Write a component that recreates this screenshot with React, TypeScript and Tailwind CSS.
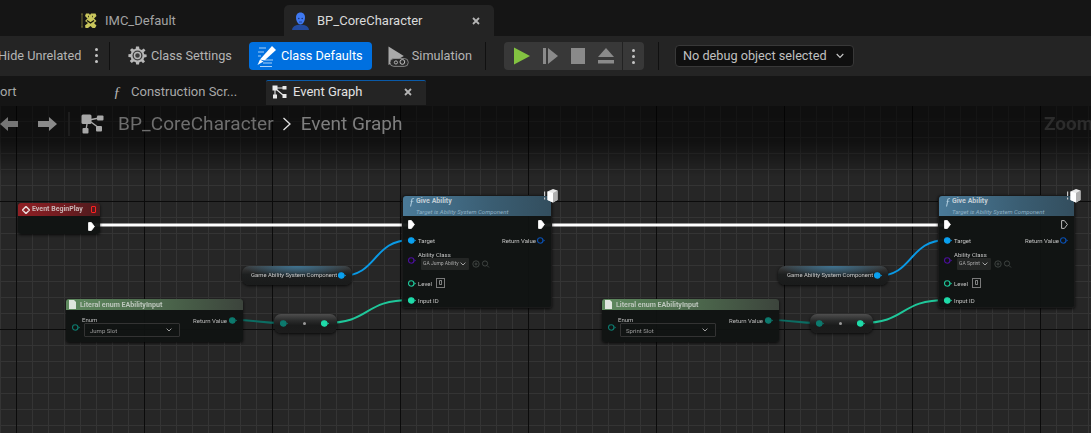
import React from "react";

const Kebab = ({ c = "bg-[#c4c4c4]" }: { c?: string }) => (
  <div className="flex flex-col gap-[3px] items-center">
    <span className={`w-[3px] h-[3px] rounded-full ${c}`} />
    <span className={`w-[3px] h-[3px] rounded-full ${c}`} />
    <span className={`w-[3px] h-[3px] rounded-full ${c}`} />
  </div>
);

const X = ({ c = "#b5b5b5" }: { c?: string }) => (
  <svg width="8" height="8" viewBox="0 0 8 8"><path d="M1 1L7 7M7 1L1 7" stroke={c} strokeWidth="1.8" /></svg>
);

const ImcIcon = () => (
  <svg width="18" height="18" viewBox="0 0 18 18" fill="none">
    <path d="M1 2H3M2 2V15M1 15H3" stroke="#6f6a33" strokeWidth="1" />
    <path d="M6 1.5H9L10 3L11 1.5H15.5L16.5 4L14 6.5L16.5 9L14 11L16.5 13.5L15 16H12.5L10.5 14L8 16H5.5L5 13.5L8 11L5 9L7.5 6.5L5 4Z" fill="#c9c65c" />
    <path d="M8 4.5H8.8M12.3 4.5H13M7 8.5L10.5 11L14 8.5" stroke="#17170c" strokeWidth="1.4" />
  </svg>
);

const BpIcon = () => (
  <svg width="17" height="18" viewBox="0 0 17 18">
    <path d="M0 18C0.5 14.5 3 13.5 6.5 12.8H10.5C14 13.5 16.5 14.5 17 18Z" fill="#234a9c" />
    <path d="M8.5 0.5C11.5 0.5 13 2.8 13 5.6C13 9 11 12.6 8.5 12.6C6 12.6 4 9 4 5.6C4 2.8 5.5 0.5 8.5 0.5Z" fill="#3f79f2" />
    <circle cx="6.8" cy="6.5" r="0.8" fill="#1a357d" /><circle cx="10.2" cy="6.5" r="0.8" fill="#1a357d" />
    <path d="M7 10H10" stroke="#1a357d" strokeWidth="0.8" />
  </svg>
);

const Gear = () => (
  <svg width="19" height="19" viewBox="0 0 19 19">
    <path d="M8 0.5H11L11.5 3L13.6 3.9L15.8 2.5L17.5 4.6L15.6 6.3L16.2 8.2L18.6 8.5V11L16.2 11.4L15.5 13.4L17 15.4L15 17.2L13.3 15.6L11.4 16.3L11 18.6H8.2L7.7 16.3L5.8 15.5L3.7 17L1.8 15L3.4 13.2L2.7 11.3L0.4 11V8.3L2.7 8L3.5 6L2 4.1L4 2.3L5.9 3.6L7.7 2.8Z" fill="#b8b8b8" />
    <circle cx="9.5" cy="9.5" r="5" fill="#3d3d3d" />
    <circle cx="9.5" cy="9.5" r="3" fill="none" stroke="#b8b8b8" strokeWidth="1.4" />
  </svg>
);

const PenIcon = () => (
  <svg width="20" height="23" viewBox="0 0 20 23">
    <path d="M2 3H9M1 7H7M1 11H4M8 15H16M6 18H15M3 21.5H15" stroke="#bcdcfb" strokeWidth="0.9" />
    <path d="M15 1L19 5L7.5 15.5L3 14.5Z" fill="#ffffff" />
    <path d="M3 14.5L6.5 16.5L0.5 20Z" fill="#ffffff" />
  </svg>
);

const SimIcon = () => (
  <svg width="21" height="21" viewBox="0 0 21 21">
    <path d="M0.5 0.5L16 10L0.5 19Z" fill="#a9a9a9" />
    <rect x="2" y="12.5" width="18.5" height="8" rx="4" fill="#2a2a2a" stroke="#9a9a9a" strokeWidth="0.8" />
    <circle cx="8" cy="16.5" r="1.6" fill="none" stroke="#c2c2c2" strokeWidth="0.9" />
    <circle cx="14.5" cy="16" r="2.4" fill="none" stroke="#c2c2c2" strokeWidth="1" />
  </svg>
);

const GraphIcon = ({ fill = "#eaeaea", big = false }: { fill?: string; big?: boolean }) =>
  big ? (
    <svg width="23" height="20" viewBox="0 0 23 20">
      <path d="M8 6L18 4M6 10L5 16M10 8L18 14" stroke={fill} strokeWidth="1.4" />
      <rect x="0.5" y="0.5" width="10" height="9.5" rx="1.5" fill={fill} />
      <rect x="16" y="1.5" width="6.5" height="5" rx="1" fill={fill} />
      <rect x="1.5" y="14" width="6" height="5.5" rx="1" fill={fill} />
      <rect x="15" y="12" width="6" height="5.5" rx="1" fill={fill} />
    </svg>
  ) : (
    <svg width="15" height="14" viewBox="0 0 15 14">
      <path d="M5 3L12 3M3 5V10M5 5L11 10" stroke={fill} strokeWidth="1.1" />
      <rect x="0.5" y="0.5" width="5" height="5" fill={fill} />
      <rect x="10.5" y="1" width="4" height="3.5" fill={fill} />
      <rect x="1" y="9.5" width="4" height="4" fill={fill} />
      <rect x="10.5" y="9" width="4" height="4" fill={fill} />
    </svg>
  );

const Cube = () => (
  <svg width="14" height="15" viewBox="0 0 14 15">
    <path d="M0 3.5H1.2V8H0ZM0 9.5H1.2V11.5H0Z" fill="#c8c8c8" />
    <path d="M3.5 3.5L9 1L13.5 2.5V12L9 14.5L3.5 12Z" fill="#e8e8e8" />
    <path d="M3.5 3.5L9 5V14.5L3.5 12Z" fill="#ffffff" />
    <path d="M9 5L13.5 2.5V12L9 14.5Z" fill="#b0b0b0" />
  </svg>
);

const Exec = ({ filled = true, color = "#ffffff" }: { filled?: boolean; color?: string }) => (
  <svg width="7" height="9" viewBox="0 0 7 9" className="shrink-0">
    <path d="M0.6 0.6H3.4L6.4 4.5L3.4 8.4H0.6Z" fill={filled ? color : "none"} stroke={color} strokeWidth="0.9" />
  </svg>
);

const Pin = ({ color, filled = true }: { color: string; filled?: boolean }) => (
  <svg width="8" height="7" viewBox="0 0 8 7" className="shrink-0">
    <circle cx="3.2" cy="3.5" r="2.7" fill={filled ? color : "none"} stroke={color} strokeWidth="1.1" />
    <path d="M6.4 2.3L8 3.5L6.4 4.7Z" fill={color} />
  </svg>
);

const SmallChevron = ({ c = "#c4c4c4" }: { c?: string }) => (
  <svg width="6" height="4" viewBox="0 0 6 4" className="shrink-0"><path d="M0.6 0.6L3 3L5.4 0.6" fill="none" stroke={c} strokeWidth="0.8" /></svg>
);

function GiveAbility({ ability, nodeWidth, ddWidth, hollowExec }: { ability: string; nodeWidth: string; ddWidth: string; hollowExec?: boolean }) {
  return (
    <div className={`absolute left-[402px] top-[89px] ${nodeWidth} h-[113px] rounded-[3px] bg-[#101312]/95 shadow-[0_1px_3px_rgba(0,0,0,0.8)] border border-[#1a1a1a]`}>
      <div className="blur-[0.25px]">
        <div className="h-[20px] rounded-t-[3px] bg-[linear-gradient(90deg,#4a7a98,#3a5d72_60%,#334e5e)] pl-[13px] leading-none pt-[1px]">
          <div className="text-[7px] font-bold text-[#c3ced6] leading-[9px] whitespace-nowrap">Give Ability</div>
          <div className="text-[6px] italic text-[#90b2c6] leading-[9px] mt-[1px] whitespace-nowrap">Target is Ability System Component</div>
        </div>
        <div className="pl-[5px] pr-[6px] pt-[4px] flex flex-col text-[6px] text-[#c4c4c4]">
          <div className="flex justify-between h-[9px] items-center">
            <Exec />
            <Exec filled={!hollowExec} color={hollowExec ? "#cfcfcf" : "#ffffff"} />
          </div>
          <div className="flex justify-between items-center h-[8px] mt-[7px]">
            <div className="flex items-center gap-[2px]"><Pin color="#0aa1f0" /><span>Target</span></div>
            <div className="flex items-center gap-[1px]"><span>Return Value</span><Pin color="#0a4fb0" filled={false} /></div>
          </div>
          <div className="flex mt-[7px] h-[20px]">
            <div className="mt-[6px]"><Pin color="#4b0f9c" filled={false} /></div>
            <div className="ml-[2px]">
              <div className="h-[8px] leading-[8px]">Ability Class</div>
              <div className="flex items-center gap-[3px] mt-[-1px] ml-[3px]">
                <div className={`${ddWidth} h-[12px] rounded-[1px] bg-[#242625] flex items-center justify-between pl-[2px] pr-[3px] text-[5px] text-[#a8a8a8] whitespace-nowrap`}>
                  <span>{ability}</span><SmallChevron />
                </div>
                <svg width="20" height="8" viewBox="0 0 20 8" fill="none" stroke="#4a4f4d" strokeWidth="0.8" className="shrink-0">
                  <circle cx="4" cy="4" r="3.2" /><path d="M2.5 4H5.5M4 2.5V5.5" />
                  <circle cx="13" cy="3.5" r="2.6" /><path d="M15 5.5L17 7.5" />
                </svg>
              </div>
            </div>
          </div>
          <div className="flex items-center mt-[7px] h-[10px] gap-[2px]">
            <Pin color="#1fc79a" filled={false} /><span className="w-[16px]">Level</span>
            <div className="w-[9px] h-[10px] border border-[#7a7a7a] text-[6.5px] leading-[8px] text-center">0</div>
          </div>
          <div className="flex items-center mt-[8px] h-[8px] gap-[2px]"><Pin color="#1fdcaa" /><span>Input ID</span></div>
        </div>
      </div>
      <div className="absolute left-[6px] top-[-1px] text-[#b9d4e4] text-[11px] italic font-['Liberation_Serif',serif] leading-[12px]">ƒ</div>
      <div className="absolute right-[-7px] top-[-8px]"><Cube /></div>
    </div>
  );
}

function Group({ slot, ability, nodeWidth, ddWidth, hollowExec }: { slot: string; ability: string; nodeWidth: string; ddWidth: string; hollowExec?: boolean }) {
  return (
    <>
      {/* Literal enum */}
      <div className="absolute left-[66px] top-[193px] w-[177px] h-[43px] rounded-[3px] bg-[#101312]/95 shadow-[0_1px_3px_rgba(0,0,0,0.8)]">
        <div className="blur-[0.25px]">
          <div className="h-[11px] rounded-t-[3px] bg-[linear-gradient(90deg,#5f8a5f,#4f6e4f_45%,#3c443c)] flex items-center pl-[3px] gap-[4px]">
            <svg width="7" height="9" viewBox="0 0 7 9" className="shrink-0"><path d="M0 0H5L7 2V9H0Z" fill="#dfe6df" /></svg>
            <span className="text-[7.1px] font-bold text-[#bcc6bc] whitespace-nowrap leading-none">Literal enum EAbilityInput</span>
          </div>
          <div className="flex justify-between pl-[6px] pr-[6px] text-[6px] text-[#bdbdbd]">
            <div className="flex">
              <div className="mt-[14px]"><Pin color="#0d7a6e" filled={false} /></div>
              <div className="ml-[2px]">
                <div className="h-[8px] leading-[8px] mt-[6px]">Enum</div>
                <div className="w-[96px] h-[14px] mt-[-1px] ml-[2px] border border-[#333] rounded-[1px] flex items-center justify-between pl-[5px] pr-[7px] text-[6px] text-[#9c9c9c]">
                  <span>{slot}</span><SmallChevron />
                </div>
              </div>
            </div>
            <div className="flex items-center h-[8px] mt-[6px] gap-[2px]"><span>Return Value</span><Pin color="#0d7a6e" /></div>
          </div>
        </div>
      </div>
      {/* Convert pill */}
      <div className="absolute left-[274px] top-[208px] w-[63px] h-[19px] rounded-[7px] bg-[linear-gradient(#4e4e4e,#2a2b2b_35%,#1a1b1b_60%,#1c1c1c)] shadow-[0_1px_3px_rgba(0,0,0,0.8)] flex items-center justify-between pl-[6px] pr-[8px]">
        <Pin color="#0d7a6e" />
        <span className="w-[3px] h-[3px] rounded-full bg-[#9a9a9a]" />
        <Pin color="#1fdcaa" />
      </div>
      {/* Game Ability System Component */}
      <div className="absolute left-[242px] top-[160px] w-[110px] h-[19px] rounded-[7px] bg-[radial-gradient(ellipse_50%_60%_at_50%_0%,#3f7391,transparent),linear-gradient(#3e3e3e,#1d1f1f_45%,#1a1b1b)] shadow-[0_1px_3px_rgba(0,0,0,0.8)] flex items-center pl-[9px] gap-[1px] text-[5.9px] text-[#c9c9c9] whitespace-nowrap">
        <span className="w-[86px] blur-[0.25px]">Game Ability System Component</span>
        <Pin color="#0aa1f0" />
      </div>
      <GiveAbility ability={ability} nodeWidth={nodeWidth} ddWidth={ddWidth} hollowExec={hollowExec} />
    </>
  );
}

export default function App() {
  return (
    <div className="relative w-[1091px] h-[433px] overflow-hidden bg-[#151515] flex flex-col font-['Roboto',sans-serif] text-[13px]">
      {/* Document tabs */}
      <div className="h-[36px] pt-[5px] flex shrink-0">
        <div className="w-[284px] flex items-center pl-[80px] gap-[7px] text-[#a3a3a3]">
          <ImcIcon /><span>IMC_Default</span>
        </div>
        <div className="w-[210px] rounded-t-[5px] bg-[#242424] flex items-center pl-[8px] pr-[14px] text-[#dadada]">
          <BpIcon />
          <span className="ml-[8px]">BP_CoreCharacter</span>
          <span className="ml-auto"><X /></span>
        </div>
      </div>
      {/* Toolbar */}
      <div className="h-[40px] bg-[#242424] flex items-center shrink-0 text-[#b4b4b4] text-[12.7px]">
        <div className="w-[109px] flex items-center justify-between pr-[11px] overflow-hidden">
          <span className="ml-[-2px] whitespace-nowrap">Hide Unrelated</span><Kebab />
        </div>
        <div className="w-[1px] h-[28px] bg-[#101010]" />
        <div className="ml-[18px] w-[104px] flex items-center gap-[4px]"><Gear /><span className="whitespace-nowrap">Class Settings</span></div>
        <div className="ml-[17px] w-[123px] h-[28px] rounded-[4px] bg-[#0070e0] text-white flex items-center pl-[8px] gap-[4px]">
          <PenIcon /><span className="whitespace-nowrap">Class Defaults</span>
        </div>
        <div className="ml-[16px] w-[84px] flex items-center gap-[3px]"><SimIcon /><span>Simulation</span></div>
        <div className="ml-[13px] w-[1px] h-[28px] bg-[#101010]" />
        <div className="ml-[18px] w-[140px] h-[28px] rounded-[4px] bg-[#383838] flex items-center">
          <svg width="118" height="18" viewBox="0 0 118 18" className="shrink-0">
            <path d="M10 0.5L26 9L10 17.5Z" fill="#83c341" />
            <rect x="39" y="1" width="3" height="16" fill="#8a8a8a" />
            <path d="M44 1L54 9L44 17Z" fill="#8a8a8a" />
            <rect x="67" y="1" width="14" height="16" fill="#8a8a8a" />
            <path d="M102 1L110 10H94Z" fill="#8a8a8a" />
            <rect x="94" y="13" width="16" height="3.5" fill="#8a8a8a" />
          </svg>
          <div className="w-[1px] h-[28px] bg-[#222]" />
          <div className="flex-1 flex justify-center"><Kebab /></div>
        </div>
        <div className="ml-[14px] w-[1px] h-[28px] bg-[#101010]" />
        <div className="ml-[16px] w-[179px] h-[22px] rounded-[4px] bg-[#0f0f0f] border border-[#383838] flex items-center pl-[7px] gap-[9px] text-[#c0c0c0]">
          <span className="whitespace-nowrap">No debug object selected</span>
          <svg width="8" height="6" viewBox="0 0 8 6" className="shrink-0"><path d="M0.7 1L4 4.5L7.3 1" fill="none" stroke="#c8c8c8" strokeWidth="1.1" /></svg>
        </div>
      </div>
      {/* Sub tabs */}
      <div className="h-[30px] flex shrink-0 pt-[4px] text-[#a8a8a8]">
        <div className="w-[112px] flex items-center overflow-hidden pb-[2px]"><span>ort</span></div>
        <div className="w-[154px] flex items-center gap-[9px] pb-[2px]">
          <span className="text-[15px] italic font-['Liberation_Serif',serif] w-[10px] text-center text-[#b5b5b5]">ƒ</span>
          <span className="whitespace-nowrap">Construction Scr...</span>
        </div>
        <div className="w-[160px] h-[25px] bg-[#242424] rounded-t-[2px] border-t border-[#0a5aa8] flex items-center pl-[6px] pr-[14px] pb-[2px] text-[#e2e2e2]">
          <GraphIcon />
          <span className="ml-[6px]">Event Graph</span>
          <span className="ml-auto"><X /></span>
        </div>
      </div>
      {/* Graph */}
      <div className="relative flex-1 overflow-hidden bg-[#262626] bg-[linear-gradient(#0b0b0b_1px,transparent_1px),linear-gradient(90deg,#0b0b0b_1px,transparent_1px),linear-gradient(#343434_1px,transparent_1px),linear-gradient(90deg,#343434_1px,transparent_1px)] bg-[size:128px_128px,128px_128px,16px_16px,16px_16px] bg-[position:0_95px,16px_0,0_15px,0_0]">
        <svg width="1091" height="327" viewBox="0 106 1091 327" className="absolute left-0 top-0" fill="none">
          {[0, 536].map((d) => (
            <g key={d} transform={`translate(${d} 0)`}>
              <path d="M341 276C378 276 372 240 411 240" stroke="#0a9ae6" strokeWidth="2" />
              <path d="M325 323C372 323 362 300 411 300" stroke="#1fc79a" strokeWidth="2" />
              <path d="M233 320C258 320 258 323 283 323" stroke="#0c6c62" strokeWidth="2" />
            </g>
          ))}
          <path d="M95 225H411" stroke="#ffffff" strokeWidth="3" />
          <path d="M545 225H947" stroke="#ffffff" strokeWidth="3" />
        </svg>

        {/* Event BeginPlay */}
        <div className="absolute left-[18px] top-[97px] w-[82px] h-[31px] rounded-[3px] bg-[#101312]/95 shadow-[0_1px_3px_rgba(0,0,0,0.8)]">
          <div className="h-[13px] rounded-t-[3px] bg-[linear-gradient(90deg,#8f1f24,#6e1c20_60%,#4a1c1e)] flex items-center pl-[4px] gap-[2px] blur-[0.25px]">
            <svg width="8" height="8" viewBox="0 0 8 8" className="shrink-0"><path d="M4 0.5L7.5 4L4 7.5L0.5 4Z" fill="none" stroke="#e8dada" strokeWidth="1.5" /></svg>
            <span className="text-[7px] font-bold text-[#c9b8b8] whitespace-nowrap">Event BeginPlay</span>
            <span className="ml-auto mr-[4px] w-[5px] h-[7px] border border-[#ff2020] rounded-[1px]" />
          </div>
          <div className="flex justify-end pr-[5px] pt-[6px]"><Exec /></div>
        </div>

        <Group slot="Jump Slot" ability="GA Jump Ability" nodeWidth="w-[150px]" ddWidth="w-[48px]" />
        <div className="absolute left-[536px] top-0 w-[555px] h-full">
          <Group slot="Sprint Slot" ability="GA Sprint" nodeWidth="w-[137px]" ddWidth="w-[34px]" hollowExec />
        </div>

        {/* Graph title bar overlay */}
        <div className="absolute left-0 top-0 w-full h-[70px] bg-[linear-gradient(rgba(0,0,0,0.6),rgba(0,0,0,0.55)_50%,transparent)] pointer-events-none" />
        <div className="absolute left-0 top-[3px] w-full h-[30px] flex items-center">
          <svg width="60" height="16" viewBox="0 0 60 16" className="shrink-0">
            <path d="M0 8L8 1V5H18V11H8V15Z" fill="#757575" />
            <path d="M57 8L49 1V5H38V11H49V15Z" fill="#8a8a8a" />
          </svg>
          <div className="ml-[8px] w-[2px] h-[24px] bg-[#1e1e1e]" />
          <div className="ml-[11px]"><GraphIcon fill="#a8a8a8" big /></div>
          <span className="ml-[14px] text-[19px] text-[#6e6e6e] tracking-[0.1px] whitespace-nowrap">BP_CoreCharacter</span>
          <svg width="10" height="14" viewBox="0 0 10 14" className="ml-[8px] shrink-0"><path d="M1.5 1L8 7L1.5 13" fill="none" stroke="#e0e0e0" strokeWidth="1.3" /></svg>
          <span className="ml-[9px] text-[19px] text-[#7e7e7e] whitespace-nowrap">Event Graph</span>
          <span className="absolute left-[1044px] text-[19px] font-bold text-[#2c2c2c] whitespace-nowrap">Zoom</span>
        </div>
      </div>
    </div>
  );
}
